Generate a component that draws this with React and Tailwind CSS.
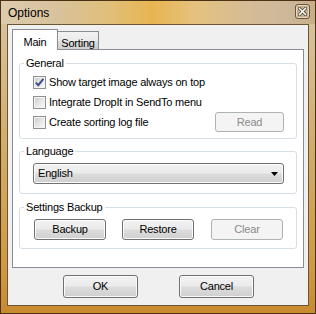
const FONT = "font-['Liberation_Sans',Arial,sans-serif]";

function Button({ children, disabled, className = '' }) {
  const look = disabled
    ? 'border-[#adb2b5] bg-[#f4f4f4] text-[#8b8b8b]'
    : 'border-[#707070] bg-[linear-gradient(180deg,#f2f2f2_0%,#ebebeb_48%,#dddddd_52%,#cfcfcf_100%)] text-black shadow-[inset_0_0_0_1px_#fbfbfb]';
  return (
    <div className={`flex shrink-0 items-center justify-center rounded-[3px] border text-[11px] tracking-[-0.2px] ${look} ${className}`}>
      {children}
    </div>
  );
}

function Checkbox({ checked }) {
  return (
    <div className="flex h-[13px] w-[13px] shrink-0 items-center justify-center border border-[#8e8f8f] bg-[#f4f4f4] p-px">
      <div className="relative h-full w-full bg-[linear-gradient(135deg,#cdcdcd_0%,#e6e6e6_50%,#f7f7f7_100%)]">
        {checked && (
          <svg className="absolute -left-px -top-px" width="11" height="11" viewBox="0 0 11 11">
            <path d="M1.8 5.6 L4.3 8.2 L9.4 1.8" fill="none" stroke="#3a4f8a" strokeWidth="1.9" />
          </svg>
        )}
      </div>
    </div>
  );
}

function Group({ title, children, className = '' }) {
  return (
    <fieldset className={`ml-[6px] w-[278px] rounded-[3px] border border-[#d5dfe5] px-0 ${className}`}>
      <legend className="ml-[4px] px-[2px] text-[11px] leading-[14px] tracking-[-0.2px] text-black">{title}</legend>
      {children}
    </fieldset>
  );
}

function CheckRow({ checked, label, children }) {
  return (
    <div className="flex h-[20px] items-center pl-[13px] pr-[12px]">
      <Checkbox checked={checked} />
      <span className="ml-[3px] text-[11px] tracking-[-0.2px] text-black">{label}</span>
      {children}
    </div>
  );
}

export default function App() {
  return (
    <div className={`${FONT} flex h-[314px] w-[316px] flex-col border border-[#4b3214] bg-[linear-gradient(180deg,#d9c6a4_0%,#d2ad6c_45%,#cf9a46_85%,#c98a30_100%)]`}>
      {/* Title bar */}
      <div className="flex h-[23px] items-center justify-between bg-[linear-gradient(90deg,#dccbae_0%,#d8c29c_18%,#e0bf78_35%,#e8b552_48%,#e4c27e_62%,#d6bc96_78%,#cdb79a_92%,#c9ad86_100%)] pl-[7px] pr-[5px]">
        <span className="text-[12px] leading-none text-black">Options</span>
        <div className="mt-[-3px] flex h-[15px] w-[15px] items-center justify-center rounded-[3px] border border-[#6a5538] bg-[#c4ae8e] shadow-[inset_0_0_0_1px_#e6d8c2]">
          <svg width="9" height="9" viewBox="0 0 9 9">
            <path d="M1.5 1.5 L7.5 7.5 M7.5 1.5 L1.5 7.5" stroke="#3b2f22" strokeWidth="3" strokeLinecap="square" />
            <path d="M1.5 1.5 L7.5 7.5 M7.5 1.5 L1.5 7.5" stroke="#ffffff" strokeWidth="1.6" strokeLinecap="square" />
          </svg>
        </div>
      </div>

      {/* Client area */}
      <div className="mx-[6px] flex h-[282px] flex-col border border-[#6b5533] bg-[#f0f0f0]">
        {/* Tabs */}
        <div className="ml-[4px] mt-[4px] flex h-[20px] items-end">
          <div className="relative z-10 mb-[-1px] flex h-[21px] w-[46px] items-start justify-center border border-b-0 border-[#898c95] bg-white pt-[4px] text-[11px] tracking-[-0.2px] text-black">
            Main
          </div>
          <div className="ml-[-1px] flex h-[18px] w-[42px] items-start justify-center border border-b-0 border-[#898c95] bg-[linear-gradient(180deg,#f2f2f2_0%,#ebebeb_50%,#dddddd_51%,#cfcfcf_100%)] pt-[3px] text-[11px] tracking-[-0.2px] text-black">
            Sorting
          </div>
        </div>

        {/* Tab panel */}
        <div className="ml-[4px] h-[219px] w-[292px] border border-[#898c95] bg-white">
          <Group title="General" className="mt-[6px] pb-[6px] pt-[2px]">
            <CheckRow checked label="Show target image always on top" />
            <CheckRow label="Integrate DropIt in SendTo menu" />
            <CheckRow label="Create sorting log file">
              <Button disabled className="ml-auto h-[20px] w-[69px]">Read</Button>
            </CheckRow>
          </Group>

          <Group title="Language" className="mt-[5px] pb-[9px] pt-[5px]">
            <div className="ml-[13px] flex h-[21px] w-[251px] items-center justify-between rounded-[3px] border border-[#707070] bg-[linear-gradient(180deg,#f2f2f2_0%,#ebebeb_48%,#dddddd_52%,#cfcfcf_100%)] pl-[4px] pr-[5px] text-[11px] tracking-[-0.2px] text-black shadow-[inset_0_0_0_1px_#fbfbfb]">
              <span>English</span>
              <svg width="7" height="4" viewBox="0 0 7 4">
                <path d="M0 0 L7 0 L3.5 4 Z" fill="#000" />
              </svg>
            </div>
          </Group>

          <Group title="Settings Backup" className="mt-[6px] pb-[8px] pt-[5px]">
            <div className="flex pl-[14px]">
              <Button className="h-[21px] w-[72px]">Backup</Button>
              <Button className="ml-[16px] h-[21px] w-[72px]">Restore</Button>
              <Button disabled className="ml-[17px] h-[21px] w-[72px]">Clear</Button>
            </div>
          </Group>
        </div>

        {/* Dialog buttons */}
        <div className="ml-[55px] mt-[7px] flex">
          <Button className="h-[23px] w-[75px]">OK</Button>
          <Button className="ml-[41px] h-[23px] w-[75px]">Cancel</Button>
        </div>
      </div>
    </div>
  );
}
